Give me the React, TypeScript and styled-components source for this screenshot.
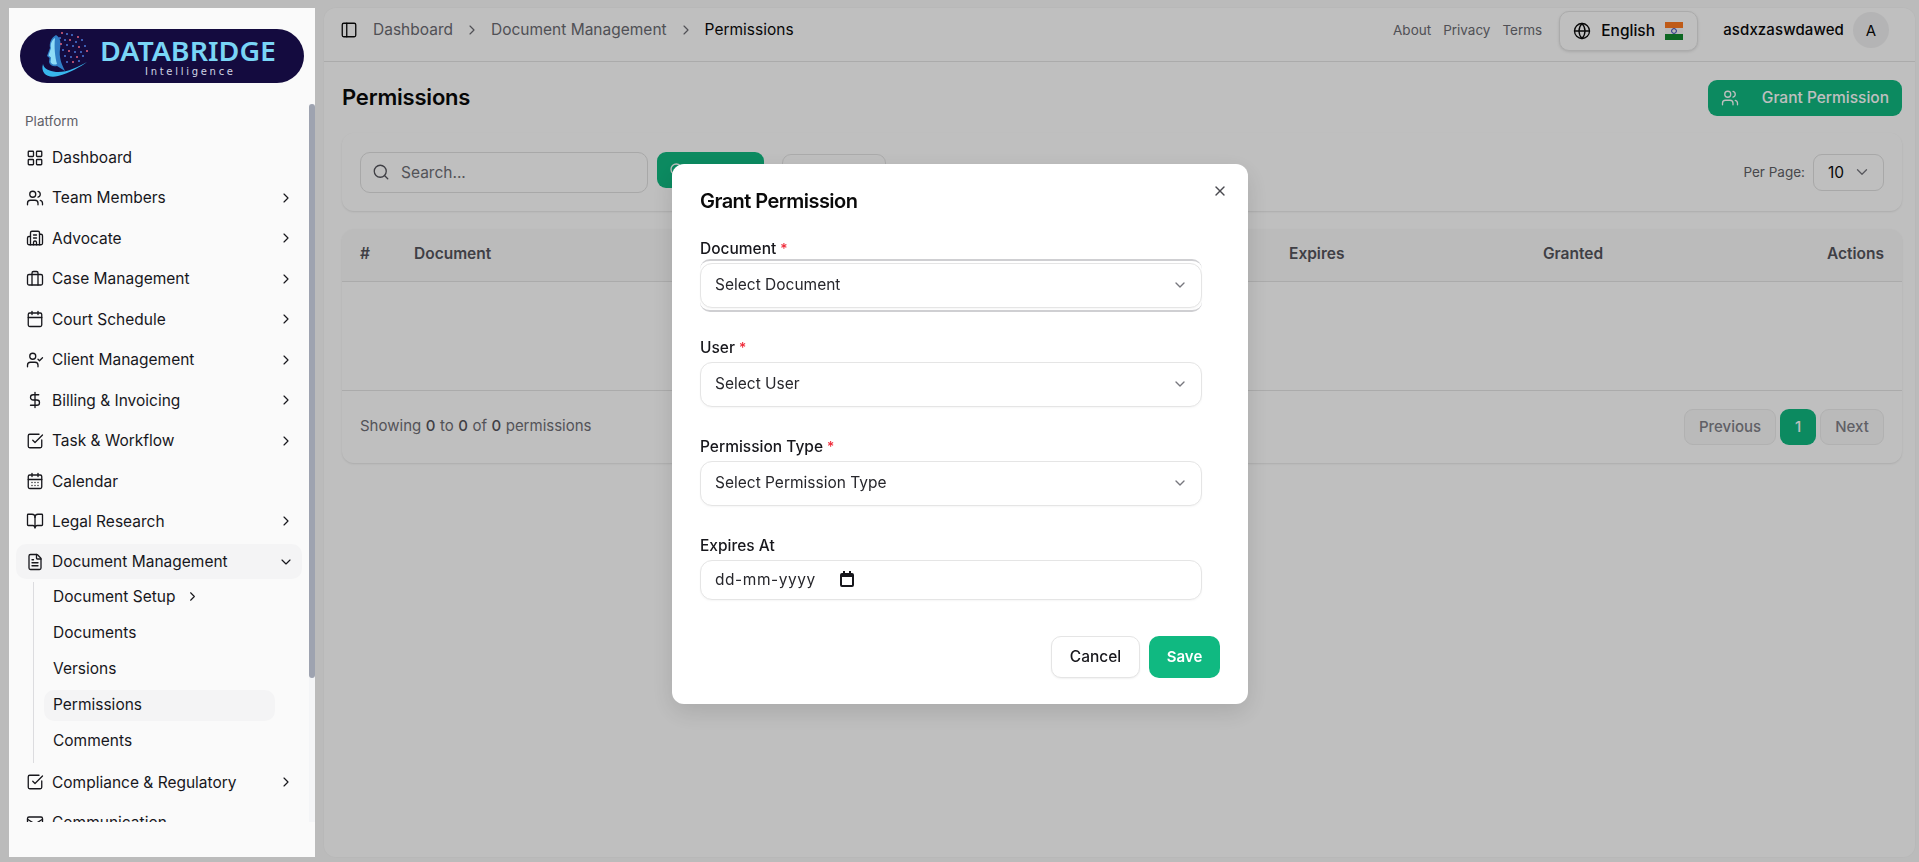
import React from "react";
import styled, { createGlobalStyle } from "styled-components";
import {
  LayoutGrid, Users, Building2, Briefcase, Calendar, UserCheck, DollarSign, SquareCheckBig,
  CalendarDays, BookOpen, FileText, Mail, ChevronRight, ChevronDown, PanelLeft, Search,
  Globe, X,
} from "lucide-react";

const Global = createGlobalStyle`
  html, body { margin: 0; padding: 0; height: 100%; overflow: hidden; background: #fafafa; }
  body { font-family: Inter, "Noto Sans", sans-serif; color: #0a0a0a; }
  * { box-sizing: border-box; }
`;

const Page = styled.div`
  display: flex;
  width: 1919px;
  height: 862px;
  background: #fafafa;
  overflow: hidden;
`;

const Sidebar = styled.aside`
  position: relative;
  z-index: 60;
  flex: none;
  width: 306px;
  height: 849px;
  margin: 8px 0 0 9px;
  background: #fafafa;
  display: flex;
  flex-direction: column;
`;

const LogoWrap = styled.div`
  padding: 21px 11px 0;
  height: 96px;
  flex: none;
`;

const NavScroll = styled.div`
  position: relative;
  height: 718px;
  overflow: hidden;
  padding: 8px 0 0 7px;
`;

const ScrollTrack = styled.div`
  position: absolute;
  top: 0;
  right: 0;
  bottom: 0;
  width: 6px;
  background: #f4f5f7;
`;

const ScrollThumb = styled.div`
  width: 6px;
  height: 574px;
  border-radius: 3px;
  background: #9ea3b0;
`;

const GroupLabel = styled.div`
  font-size: 13.5px;
  line-height: 18px;
  color: #5f6068;
  padding-left: 9px;
  margin-bottom: 10px;
`;

const NavRow = styled.div<{ $open?: boolean }>`
  width: 286px;
  height: 35px;
  margin-bottom: 5.45px;
  display: flex;
  align-items: center;
  gap: 8px;
  padding: 0 8px 0 10px;
  border-radius: 10px;
  font-size: 15.5px;
  color: #17171c;
  background: ${(p) => (p.$open ? "#f4f4f5" : "transparent")};
  svg { flex: none; }
`;

const NavText = styled.span`
  flex: 1;
  white-space: nowrap;
`;

const SubList = styled.div`
  width: 242px;
  margin: -3px 0 2px 17px;
  height: 181px;
  border-left: 1px solid #dcdcdf;
  padding: 0 0 0 10px;
  display: flex;
  flex-direction: column;
  gap: 5px;
`;

const SubRow = styled.div<{ $active?: boolean }>`
  height: 31px;
  flex: none;
  display: flex;
  align-items: center;
  gap: 10px;
  padding: 0 9px 1px;
  border-radius: 10px;
  font-size: 15.5px;
  color: #17171c;
  background: ${(p) => (p.$active ? "#f4f4f5" : "transparent")};
`;

const Main = styled.main`
  flex: 1;
  min-width: 0;
  margin: 8px 4px 5px 9px;
  background: #fff;
  border-radius: 12px;
  box-shadow: 0 0 0 1px rgba(0, 0, 0, 0.015);
`;

const Header = styled.header`
  height: 54px;
  display: flex;
  align-items: center;
  padding: 0 26px 10px 16px;
  border-bottom: 1px solid #e5e5e5;
`;

const Crumbs = styled.nav`
  flex: 1;
  display: flex;
  align-items: center;
  gap: 11px;
  font-size: 15.5px;
  color: #6b6b72;
  margin-left: 15px;
  svg { color: #6b6b72; }
`;

const Current = styled.span`
  color: #0a0a0a;
`;

const HeaderLinks = styled.div`
  display: flex;
  gap: 12px;
  font-size: 13.5px;
  color: #6b6b72;
  margin-right: 17px;
`;

const LangButton = styled.div`
  width: 139px;
  height: 40px;
  margin-top: 2px;
  display: flex;
  align-items: center;
  gap: 10px;
  padding: 0 13px;
  background: #fff;
  border: 1px solid #e5e5e5;
  border-radius: 10px;
  box-shadow: 0 1px 3px rgba(0, 0, 0, 0.12);
  font-size: 15.5px;
  font-weight: 500;
`;

const UserName = styled.span`
  font-size: 15px;
  font-weight: 500;
  margin-left: 25px;
  letter-spacing: 0.1px;
`;

const Avatar = styled.span`
  width: 36px;
  height: 36px;
  margin: 1px 0 0 9px;
  border-radius: 50%;
  background: #f1f1f2;
  display: flex;
  align-items: center;
  justify-content: center;
  font-size: 15px;
`;

const Content = styled.div`
  padding: 18px 13px 0 18px;
`;

const TitleRow = styled.div`
  display: flex;
  align-items: center;
  justify-content: space-between;
  height: 36px;
  margin-bottom: 17px;
`;

const PageTitle = styled.h1`
  margin: 0 0 2px;
  font-size: 22px;
  font-weight: 600;
  letter-spacing: -0.2px;
`;

const PrimaryAction = styled.button`
  width: 194px;
  height: 36px;
  display: flex;
  align-items: center;
  justify-content: space-between;
  padding: 0 13px 1px;
  background: #10b981;
  color: #fff;
  border: 0;
  border-radius: 9px;
  font: 500 15.5px Inter, sans-serif;
`;

const FilterCard = styled.section`
  height: 78px;
  display: flex;
  align-items: center;
  padding: 0 18px;
  gap: 9px;
  border-radius: 12px;
  background: #fff;
  box-shadow: 0 1px 2px rgba(0, 0, 0, 0.1);
  margin-bottom: 18px;
`;

const SearchBox = styled.div`
  width: 288px;
  height: 41px;
  display: flex;
  align-items: center;
  gap: 11px;
  padding: 0 11px;
  border: 1px solid #e0e0e0;
  border-radius: 10px;
  font-size: 15.5px;
  color: #6f6f76;
  svg { color: #55555c; }
`;

const FilterButton = styled.button<{ $solid?: boolean }>`
  width: ${(p) => (p.$solid ? "107px" : "104px")};
  height: 36px;
  margin-right: ${(p) => (p.$solid ? "9px" : "0")};
  margin-top: ${(p) => (p.$solid ? "-4px" : "0")};
  display: flex;
  align-items: center;
  gap: 8px;
  padding: 0 12px;
  background: ${(p) => (p.$solid ? "#10b981" : "#fff")};
  color: ${(p) => (p.$solid ? "#fff" : "#111")};
  border: ${(p) => (p.$solid ? "0" : "1px solid #e5e5e5")};
  border-radius: 9px;
  font: 500 14px Inter, sans-serif;
`;

const PerPage = styled.div`
  margin-left: auto;
  display: flex;
  align-items: center;
  gap: 8px;
  font-size: 13.5px;
  color: #5f5f66;
`;

const PerPageSelect = styled.div`
  width: 71px;
  height: 37px;
  display: flex;
  align-items: center;
  justify-content: space-between;
  padding: 0 12px 0 14px;
  border: 1px solid #e0e0e0;
  border-radius: 9px;
  color: #0a0a0a;
  font-size: 15.5px;
  svg { color: #77777e; }
`;

const TableCard = styled.section`
  height: 234px;
  border-radius: 12px;
  background: #fff;
  box-shadow: 0 1px 2px rgba(0, 0, 0, 0.1);
  overflow: hidden;
`;

const HeadRow = styled.div`
  height: 53px;
  display: grid;
  grid-template-columns: 54px 390px 240px 245px 254px 165px 1fr;
  align-items: center;
  padding: 0 18px 3px;
  background: #fafafa;
  border-bottom: 1px solid #e5e5e5;
  font-size: 15.5px;
  font-weight: 600;
  color: #55555c;
`;

const RightCell = styled.span`
  text-align: right;
`;

const EmptyRow = styled.div`
  height: 109px;
  border-bottom: 1px solid #e5e5e5;
`;

const FootRow = styled.div`
  height: 72px;
  display: flex;
  align-items: center;
  justify-content: space-between;
  padding: 0 18px;
  font-size: 15px;
  color: #6f6f76;
`;

const FootText = styled.span`
  margin-bottom: 3px;
  word-spacing: 0.3px;
`;

const Strong = styled.span`
  font-weight: 500;
  color: #55555c;
`;

const Pager = styled.div`
  display: flex;
  gap: 4px;
`;

const PageButton = styled.div<{ $active?: boolean; $w: number }>`
  width: ${(p) => p.$w}px;
  height: 36px;
  padding-bottom: 2px;
  display: flex;
  align-items: center;
  justify-content: center;
  border-radius: 9px;
  font-size: 15px;
  font-weight: 500;
  border: ${(p) => (p.$active ? "0" : "1px solid #ececec")};
  background: ${(p) => (p.$active ? "#10b981" : "#f9f9f9")};
  color: ${(p) => (p.$active ? "#fff" : "#808088")};
`;

const Overlay = styled.div`
  position: fixed;
  inset: 0;
  z-index: 50;
  background: rgba(0, 0, 0, 0.25);
`;

const Dialog = styled.div`
  position: fixed;
  z-index: 70;
  left: 672px;
  top: 164px;
  width: 576px;
  height: 540px;
  padding: 25px 28px 0 28px;
  background: #fff;
  border-radius: 12px;
  box-shadow: 0 8px 24px rgba(0, 0, 0, 0.12);
  display: flex;
  flex-direction: column;
`;

const CloseBtn = styled.span`
  position: absolute;
  top: 19px;
  right: 20px;
  color: #4a4a50;
  display: flex;
`;

const DialogTitle = styled.h2`
  margin: 0 0 27px;
  height: 24px;
  line-height: 24px;
  font-size: 20px;
  font-weight: 600;
  letter-spacing: -0.55px;
`;

const Field = styled.div`
  width: 502px;
  height: 99px;
  flex: none;
`;

const Label = styled.label`
  display: block;
  height: 18px;
  line-height: 18px;
  margin-bottom: 5px;
  font-size: 15.5px;
  font-weight: 500;
  color: #17171c;
`;

const Req = styled.span`
  color: #ef2b3a;
  font-size: 14px;
  margin-left: 4px;
`;

const Select = styled.div`
  height: 45px;
  display: flex;
  align-items: center;
  justify-content: space-between;
  padding: 0 13px 2px 14px;
  background: #fff;
  border: 1px solid #e5e5e5;
  border-radius: 12px;
  font-size: 15.5px;
  color: #27272c;
  box-shadow: 0 1px 2px rgba(0, 0, 0, 0.04);
  svg { color: #77777e; }
`;

const FocusFrame = styled.div`
  border-radius: 10px;
  border-top: 2px solid #cfcfd2;
  border-bottom: 2px solid #cfcfd2;
  margin-top: -4px;
  padding: 2px 0;
`;

const DateField = styled.div`
  height: 40px;
  display: flex;
  align-items: center;
  gap: 24px;
  padding: 0 14px 2px;
  background: #fff;
  border: 1px solid #e5e5e5;
  border-radius: 12px;
  font-size: 15.5px;
  letter-spacing: 0.55px;
  color: #27272c;
  box-shadow: 0 1px 2px rgba(0, 0, 0, 0.04);
`;

const DialogActions = styled.div`
  margin-top: auto;
  margin-bottom: 28px;
  display: flex;
  justify-content: flex-end;
  gap: 9px;
`;

const CancelBtn = styled.button`
  width: 89px;
  height: 42px;
  padding-bottom: 2px;
  background: #fff;
  border: 1px solid #e5e5e5;
  border-radius: 10px;
  box-shadow: 0 1px 2px rgba(0, 0, 0, 0.06);
  font: 500 15.5px Inter, sans-serif;
  color: #17171c;
`;

const SaveBtn = styled.button`
  width: 71px;
  height: 42px;
  padding-bottom: 2px;
  background: #10b981;
  border: 0;
  border-radius: 10px;
  font: 600 15px Inter, sans-serif;
  color: #fff;
`;

const Logo = () => (
  <svg width="284" height="54" viewBox="0 0 284 54" style={{ display: "block" }}>
    <rect width="284" height="54" rx="27" fill="#140b3f" />
    <path d="M36 6C31 9 29 14 30 19L27 27L29.5 29L29 33C30 37 34 38 37 37L45 42C41 34 39 28 40 20C41 14 41 9 36 6Z" fill="#2f7ec6" />
    <path d="M35 9C32 11 30 15 31 19L28.5 26.5L31 28.5L30.5 33C32 36 35 36 37 35C35 28 34 18 35 9Z" fill="#8edcf7" />
    <path d="M23 35C20 44 28 50 38 47C50 44 60 38 67 33C58 38 46 44 36 43C29 42 24 40 23 35Z" fill="#38b6ec" />
    {[
      [42, 4], [47, 5], [52, 6], [58, 8], [40, 9], [45, 11], [50, 11], [56, 13], [62, 11], [41, 15],
      [47, 16], [53, 17], [59, 18], [65, 17], [43, 21], [49, 22], [55, 23], [61, 23], [67, 22], [45, 27],
      [51, 28], [57, 28], [63, 27], [47, 33], [53, 33], [59, 32],
    ].map(([cx, cy], i) => (
      <circle key={i} cx={cx} cy={cy} r="1" fill={i % 3 === 0 ? "#e0637f" : "#4a78d8"} />
    ))}
    <text x="80" y="32" textLength="176" lengthAdjust="spacingAndGlyphs" fontFamily="'Noto Sans', sans-serif" fontSize="27" fontWeight="600" fill="#79d5f6">
      DATABRIDGE
    </text>
    <text x="125" y="46" textLength="88" fontFamily="'DejaVu Sans', sans-serif" fontSize="10" fill="#d0d5e4">
      Intelligence
    </text>
  </svg>
);

const IndiaFlag = () => (
  <svg width="18" height="18" viewBox="0 0 18 18" style={{ flex: "none" }}>
    <rect width="18" height="6" fill="#ff7a20" />
    <rect y="6" width="18" height="6" fill="#f7f7f7" />
    <rect y="12" width="18" height="6" fill="#128a2e" />
    <circle cx="9" cy="9" r="2.4" fill="none" stroke="#2a3bb0" strokeWidth="1" />
  </svg>
);

const DatePickerGlyph = () => (
  <svg width="14" height="16" viewBox="0 0 14 16" style={{ flex: "none" }}>
    <path d="M3 0h2v2h4V0h2v2h1a2 2 0 0 1 2 2v10a2 2 0 0 1-2 2H2a2 2 0 0 1-2-2V4a2 2 0 0 1 2-2h1zM2 6v8h10V6z" fill="#17171c" />
  </svg>
);

const navTop = [
  { Icon: LayoutGrid, label: "Dashboard" },
  { Icon: Users, label: "Team Members", more: true },
  { Icon: Building2, label: "Advocate", more: true },
  { Icon: Briefcase, label: "Case Management", more: true },
  { Icon: Calendar, label: "Court Schedule", more: true },
  { Icon: UserCheck, label: "Client Management", more: true },
  { Icon: DollarSign, label: "Billing & Invoicing", more: true },
  { Icon: SquareCheckBig, label: "Task & Workflow", more: true },
  { Icon: CalendarDays, label: "Calendar" },
  { Icon: BookOpen, label: "Legal Research", more: true },
];

const NavItem = ({ Icon, label, more, open }: { Icon: React.ElementType; label: string; more?: boolean; open?: boolean }) => (
  <NavRow $open={open}>
    <Icon size={18} strokeWidth={1.75} />
    <NavText>{label}</NavText>
    {open ? <ChevronDown size={16} strokeWidth={1.75} /> : more ? <ChevronRight size={16} strokeWidth={1.75} /> : null}
  </NavRow>
);

export default function App() {
  return (
    <Page>
      <Global />
      <Sidebar>
        <LogoWrap><Logo /></LogoWrap>
        <NavScroll>
          <GroupLabel>Platform</GroupLabel>
          {navTop.map((n) => <NavItem key={n.label} {...n} />)}
          <NavItem Icon={FileText} label="Document Management" open />
          <SubList>
            <SubRow>Document Setup <ChevronRight size={15} strokeWidth={1.75} /></SubRow>
            <SubRow>Documents</SubRow>
            <SubRow>Versions</SubRow>
            <SubRow $active>Permissions</SubRow>
            <SubRow>Comments</SubRow>
          </SubList>
          <NavItem Icon={SquareCheckBig} label="Compliance & Regulatory" more />
          <NavItem Icon={Mail} label="Communication" />
          <ScrollTrack><ScrollThumb /></ScrollTrack>
        </NavScroll>
      </Sidebar>

      <Main>
        <Header>
          <PanelLeft size={18} strokeWidth={1.75} />
          <Crumbs>
            <span>Dashboard</span>
            <ChevronRight size={16} strokeWidth={1.75} />
            <span>Document Management</span>
            <ChevronRight size={16} strokeWidth={1.75} />
            <Current>Permissions</Current>
          </Crumbs>
          <HeaderLinks>
            <span>About</span>
            <span>Privacy</span>
            <span>Terms</span>
          </HeaderLinks>
          <LangButton>
            <Globe size={18} strokeWidth={1.75} />
            <span>English</span>
            <IndiaFlag />
          </LangButton>
          <UserName>asdxzaswdawed</UserName>
          <Avatar>A</Avatar>
        </Header>
        <Content>
          <TitleRow>
            <PageTitle>Permissions</PageTitle>
            <PrimaryAction>
              <Users size={18} strokeWidth={1.75} />
              <span>Grant Permission</span>
            </PrimaryAction>
          </TitleRow>
          <FilterCard>
            <SearchBox>
              <Search size={18} strokeWidth={1.75} />
              <span>Search...</span>
            </SearchBox>
            <FilterButton $solid>
              <Search size={16} />
              Search
            </FilterButton>
            <FilterButton>Reset</FilterButton>
            <PerPage>
              <span>Per Page:</span>
              <PerPageSelect>
                <span>10</span>
                <ChevronDown size={18} strokeWidth={1.75} />
              </PerPageSelect>
            </PerPage>
          </FilterCard>
          <TableCard>
            <HeadRow>
              <span>#</span>
              <span>Document</span>
              <span>User</span>
              <span>Permission</span>
              <span>Expires</span>
              <span>Granted</span>
              <RightCell>Actions</RightCell>
            </HeadRow>
            <EmptyRow />
            <FootRow>
              <FootText>
                Showing <Strong>0</Strong> to <Strong>0</Strong> of <Strong>0</Strong> permissions
              </FootText>
              <Pager>
                <PageButton $w={92}>Previous</PageButton>
                <PageButton $active $w={36}>1</PageButton>
                <PageButton $w={64}>Next</PageButton>
              </Pager>
            </FootRow>
          </TableCard>
        </Content>
      </Main>

      <Overlay />
      <Dialog>
        <CloseBtn><X size={16} /></CloseBtn>
        <DialogTitle>Grant Permission</DialogTitle>
        <Field>
          <Label>Document<Req>*</Req></Label>
          <FocusFrame>
            <Select>
              <span>Select Document</span>
              <ChevronDown size={16} />
            </Select>
          </FocusFrame>
        </Field>
        <Field>
          <Label>User<Req>*</Req></Label>
          <Select>
            <span>Select User</span>
            <ChevronDown size={16} />
          </Select>
        </Field>
        <Field>
          <Label>Permission Type<Req>*</Req></Label>
          <Select>
            <span>Select Permission Type</span>
            <ChevronDown size={16} />
          </Select>
        </Field>
        <Field>
          <Label>Expires At</Label>
          <DateField>
            <span>dd-mm-yyyy</span>
            <DatePickerGlyph />
          </DateField>
        </Field>
        <DialogActions>
          <CancelBtn>Cancel</CancelBtn>
          <SaveBtn>Save</SaveBtn>
        </DialogActions>
      </Dialog>
    </Page>
  );
}
